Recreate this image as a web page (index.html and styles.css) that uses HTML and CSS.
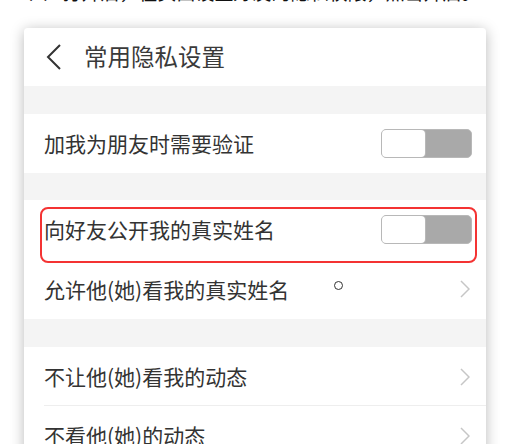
FILE: index.html
```html
<!DOCTYPE html>
<html lang="zh-CN">
<head>
    <meta charset="UTF-8">
    <meta name="viewport" content="width=device-width, initial-scale=1.0">
    <title>常用隐私设置</title>
    <link rel="stylesheet" href="styles.css">
</head>
<body>
    <div class="caption">
        <p>（4）打开后，在页面设置好友的隐私权限，点击开启。</p>
    </div>

    <div class="phone">
        <div class="header">
            <svg class="back" width="16" height="26" viewBox="0 0 16 26">
                <polyline points="14,1 2,13 14,25" fill="none" stroke="#333" stroke-width="2"/>
            </svg>
            <span class="title">常用隐私设置</span>
        </div>

        <div class="gap"></div>
        <div class="row">
            <span class="label">加我为朋友时需要验证</span>
            <div class="switch"><div class="knob"></div></div>
        </div>

        <div class="gap short"></div>
        <div class="row">
            <span class="label">向好友公开我的真实姓名</span>
            <div class="switch"><div class="knob"></div></div>
            <div class="highlight"></div>
        </div>
        <div class="row tall">
            <span class="label">允许他(她)看我的真实姓名</span>
            <span class="dot"></span>
            <svg class="arrow" width="10" height="18" viewBox="0 0 10 18">
                <polyline points="1,1 9,9 1,17" fill="none" stroke="#c6c6c6" stroke-width="1.5"/>
            </svg>
        </div>

        <div class="gap"></div>
        <div class="row line">
            <span class="label">不让他(她)看我的动态</span>
            <svg class="arrow" width="10" height="18" viewBox="0 0 10 18">
                <polyline points="1,1 9,9 1,17" fill="none" stroke="#c6c6c6" stroke-width="1.5"/>
            </svg>
        </div>
        <div class="row">
            <span class="label">不看他(她)的动态</span>
            <svg class="arrow" width="10" height="18" viewBox="0 0 10 18">
                <polyline points="1,1 9,9 1,17" fill="none" stroke="#c6c6c6" stroke-width="1.5"/>
            </svg>
        </div>
    </div>
</body>
</html>
```

FILE: styles.css
```css
body {
    margin: 0;
    background-color: #fff;
    font-family: "Noto Sans CJK SC", "Noto Sans", sans-serif;
    overflow: hidden;
}

.caption {
    height: 4px;
    overflow: hidden;
}

.caption p {
    margin: -19px 0 0 14px;
    font-size: 19px;
    line-height: 22px;
    color: #111;
    white-space: nowrap;
}

.phone {
    margin: 24px 22px 0 24px;
    width: 462px;
    background-color: #f4f4f4;
    border-radius: 4px 4px 0 0;
    box-shadow: 0 2px 14px rgba(0, 0, 0, 0.28);
}

.header {
    height: 58px;
    display: flex;
    align-items: center;
    background-color: #fff;
    border-radius: 4px 4px 0 0;
}

.back {
    margin-left: 22px;
}

.title {
    margin-left: 22px;
    font-size: 23.5px;
    color: #3a3a3a;
    margin-top: -2px;
}

.gap {
    height: 28px;
}

.gap.short {
    height: 27px;
}

.row {
    position: relative;
    height: 59px;
    display: flex;
    align-items: center;
    justify-content: space-between;
    padding: 0 14px 0 20px;
    background-color: #fff;
}

.row.tall {
    height: 60px;
}

.row.line::after {
    content: "";
    position: absolute;
    left: 20px;
    right: 0;
    bottom: 0;
    height: 1px;
    background-color: #eee;
}

.label {
    font-size: 21px;
    color: #333;
    margin-top: -1px;
}

.switch {
    width: 89px;
    height: 27px;
    border: 1px solid #b8b8b8;
    border-radius: 5px;
    background-color: #a9a9a9;
    display: flex;
}

.knob {
    width: 43px;
    height: 27px;
    border-radius: 4px;
    background-color: #fff;
    box-shadow: 1px 0 0 #b8b8b8;
}

.arrow {
    margin-right: 2px;
}

.highlight {
    position: absolute;
    left: 16px;
    top: 7px;
    width: 433px;
    height: 52px;
    border: 2px solid #f43333;
    border-radius: 8px;
    z-index: 1;
}

.dot {
    position: absolute;
    left: 310px;
    top: 22px;
    width: 7px;
    height: 7px;
    border: 1.5px solid #333;
    border-radius: 50%;
}
```
